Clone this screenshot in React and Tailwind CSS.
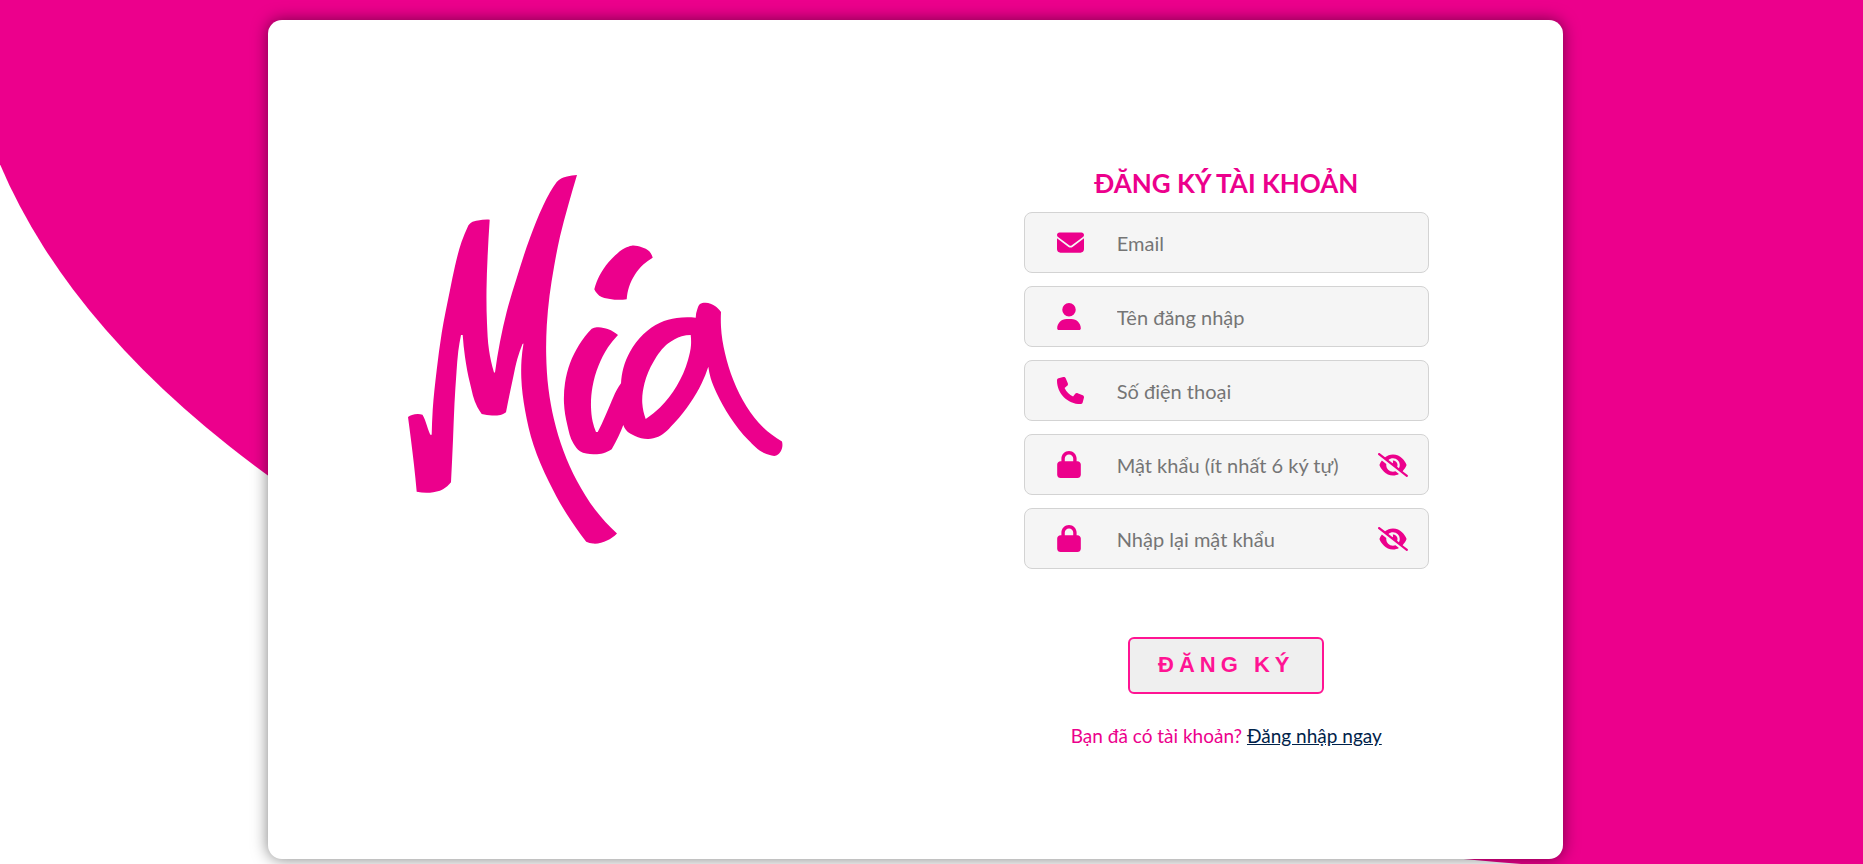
import { useState } from "react";
import { FaEnvelope, FaUser, FaPhone, FaLock, FaEyeSlash, FaEye } from "react-icons/fa6";

// Each outline is a list of smooth runs; the joins between runs are sharp corners.
const OUTLINES = [
  [
    [[408, 417], [412, 415], [418, 414], [422.5, 414.7]],
    [[422.5, 414.7], [425, 420], [428, 429], [430.3, 434.8]],
    [[431.7, 434.8], [432.7, 410], [436.7, 370], [441.7, 333], [450, 290], [455, 266], [461.5, 242], [468.3, 225.5]],
    [[468.3, 225.5], [471, 222.8], [478, 220.6], [489.7, 219.7]],
    [[489.7, 219.7], [487.6, 256.7], [486.5, 290], [487, 323.3], [489, 350], [491, 361], [494, 372.5]],
    [[495, 372.5], [500, 341.7], [506.7, 311.7], [516.7, 278], [530, 237.7], [543, 206], [550, 192.3], [556.7, 182]],
    [[556.7, 182], [560, 179.3], [567, 176.6], [577, 175]],
    [[577, 175], [568.3, 205], [560, 236.5], [554, 267], [549.5, 296], [546.8, 325], [546.2, 355], [548.5, 389], [554, 419.5], [563.5, 451], [577, 481], [595, 509.5], [617, 533.5]],
    [[617, 533.5], [607, 540.5], [593, 543.6], [586.2, 541.7]],
    [[586.2, 541.7], [566.7, 514], [549, 482], [533.5, 445], [525, 410], [521.3, 378], [521.5, 360], [523.5, 343.5]],
    [[522.5, 344], [517.3, 359], [513.3, 376.7], [506, 412.3]],
    [[506, 412.3], [502, 414.5], [492, 415.4], [481.7, 414]],
    [[481.7, 414], [477.3, 407], [470, 383.3], [465, 357], [462.7, 335]],
    [[461, 335], [458.3, 351], [456.5, 372], [454.5, 403.3], [453, 440], [451, 482.3]],
    [[451, 482.3], [443, 489.3], [430, 492.7], [416.7, 491.7]],
    [[416.7, 491.7], [414, 465], [411, 440], [408, 417]],
  ],
  [
    [[594.3, 289.3], [596.7, 281.7], [603.3, 269.3], [615, 255.5], [625, 248], [631.7, 245.7], [641.7, 247.3], [649.3, 251.3], [652.7, 257.7]],
    [[652.7, 257.7], [643.3, 264.5], [635, 274.5], [629, 287], [626.7, 299.3]],
    [[626.7, 299.3], [610, 299], [599.3, 295.7], [594.3, 289.3]],
  ],
  [
    [[591.7, 328.7], [596.7, 327.3], [608.3, 329.3], [618, 335]],
    [[618, 335], [608, 347.3], [598.5, 365.7], [592.5, 386.7], [591, 406.7], [592.7, 421.7], [596, 432]],
    [[597.7, 432], [601.7, 424], [610, 405], [617, 389.5], [621, 383.3]],
    [[621, 383.3], [623.3, 368.3], [630, 351.7], [643.3, 334.3], [660, 322.7], [676.7, 318], [695.7, 317.7]],
    [[695.7, 317.7], [697.3, 309.3], [700, 304], [705, 302.7], [715, 306], [721, 312]],
    [[721, 312], [721, 326.7], [725, 353.3], [733.3, 380], [746.7, 406.7], [763, 427.3], [782, 441.5]],
    [[782, 441.5], [782, 448.3], [778, 454.5], [774.3, 456]],
    [[774.3, 456], [764, 453], [748.3, 440], [730, 417], [716.7, 393.3], [710.7, 378.3], [708.3, 366.7]],
    [[708.3, 366.7], [701.7, 383.3], [690, 403.3], [675, 422.3], [658.3, 436.7], [648.3, 439], [635, 436], [626, 430], [623.3, 425]],
    [[623.3, 425], [618.3, 436.7], [611.7, 449.3]],
    [[611.7, 449.3], [603.3, 453.3], [593.3, 454.3], [580, 451.3], [573.3, 443.3], [567.3, 425], [564, 403.3], [565, 383], [570, 363.3], [579, 345], [591.7, 328.7]],
  ],
  [
    [[690.7, 335], [681.7, 336.2], [668.3, 343.3], [653.5, 361.7], [644.5, 383.3], [642.3, 403.3], [645.7, 419]],
    [[645.7, 419], [660, 407.5], [676.7, 386], [688, 360], [691, 345], [690.7, 335]],
  ],
];

const distance = (p, q) => Math.hypot(q[0] - p[0], q[1] - p[1]);
const slope = (p, q) => [0, 1].map((k) => (q[k] - p[k]) / distance(p, q));

// Unit-speed tangents, weighted by the distance to each neighbour.
function tangents(points) {
  const last = points.length - 1;
  const inner = points.map((point, i) => {
    if (i === 0 || i === last) return null;
    const h0 = distance(points[i - 1], point);
    const h1 = distance(point, points[i + 1]);
    const s0 = slope(points[i - 1], point);
    const s1 = slope(point, points[i + 1]);
    return [0, 1].map((k) => (s0[k] * h1 + s1[k] * h0) / (h0 + h1));
  });
  const start = slope(points[0], points[1]);
  const end = slope(points[last - 1], points[last]);
  inner[0] = start.map((v, k) => 2 * v - inner[1][k]);
  inner[last] = end.map((v, k) => 2 * v - inner[last - 1][k]);
  return inner;
}

function smoothRun(points) {
  const t = tangents(points);
  return points
    .slice(1)
    .map((to, i) => {
      const from = points[i];
      const third = distance(from, to) / 3;
      const a = from.map((v, k) => (v + t[i][k] * third).toFixed(2));
      const b = to.map((v, k) => (v - t[i + 1][k] * third).toFixed(2));
      return `C${a.join(" ")} ${b.join(" ")} ${to.join(" ")}`;
    })
    .join("");
}

const LOGO_PATH = OUTLINES.map(
  (runs) => `M${runs[0][0].join(" ")}` + runs.map((run) => `L${run[0].join(" ")}${smoothRun(run)}`).join("") + "Z"
).join("");

function Logo() {
  return (
    <svg viewBox="402 172 382 376" role="img" aria-label="Mia" className="w-[382px] max-w-full text-[#ec008c]">
      <path d={LOGO_PATH} fill="currentColor" fillRule="evenodd" />
    </svg>
  );
}

function Field({ id, icon: Icon, placeholder, type = "text", iconClass = "w-6" }) {
  const [visible, setVisible] = useState(false);
  const isPassword = type === "password";
  const Eye = visible ? FaEye : FaEyeSlash;
  return (
    <div className="flex h-[61px] items-center rounded-lg border border-[#d3d3d3] bg-[#f5f5f5] pr-5 pl-8">
      <label htmlFor={id} aria-label={placeholder} className="flex w-15 shrink-0 text-[#ec008c]">
        <Icon className={`h-[27px] ${iconClass}`} />
      </label>
      <input
        id={id}
        type={isPassword && visible ? "text" : type}
        placeholder={placeholder}
        className="h-full min-w-0 flex-1 bg-transparent text-xl text-[#333] outline-none placeholder:text-[#757575]"
      />
      {isPassword && (
        <button
          type="button"
          aria-label="Hiện mật khẩu"
          onClick={() => setVisible(!visible)}
          className="shrink-0 cursor-pointer text-[#ec008c]"
        >
          <Eye className="h-6 w-[30px]" />
        </button>
      )}
    </div>
  );
}

export default function App() {
  return (
    <div className="relative flex min-h-screen overflow-hidden bg-white pt-5 pr-[300px] pb-[5px] pl-[268px] font-[Lato,'Noto_Sans',sans-serif]">
      <div className="absolute -top-[894px] -left-9 h-[1770px] w-[200vw] rounded-[50%] bg-[#ec008c]" />
      <main className="relative grid flex-1 grid-cols-2 items-start rounded-[14px] bg-white pt-[142px] pr-5 pb-16 pl-2 shadow-[0_0_16px_rgba(0,0,0,0.5)]">
        <div className="flex justify-center pt-[10px]">
          <Logo />
        </div>
        <form className="flex flex-col items-center" onSubmit={(event) => event.preventDefault()}>
          <h1 className="text-[26px] leading-[42px] font-bold text-[#ec008c]">ĐĂNG KÝ TÀI KHOẢN</h1>
          <div className="mt-2 flex w-[405px] max-w-full flex-col gap-[13px]">
            <Field id="email" icon={FaEnvelope} placeholder="Email" type="email" iconClass="w-[27px]" />
            <Field id="username" icon={FaUser} placeholder="Tên đăng nhập" />
            <Field id="phone" icon={FaPhone} placeholder="Số điện thoại" type="tel" iconClass="w-[27px]" />
            <Field id="password" icon={FaLock} placeholder="Mật khẩu (ít nhất 6 ký tự)" type="password" />
            <Field id="confirm" icon={FaLock} placeholder="Nhập lại mật khẩu" type="password" />
          </div>
          <button
            type="submit"
            className="mt-[68px] cursor-pointer rounded-md border-2 border-[#ff1493] bg-[#efefef] px-7 pt-[13px] pb-[14px] font-['Liberation_Sans',Arial,sans-serif] text-[22px] leading-[26px] font-bold tracking-[5px] text-[#ff1493]"
          >
            ĐĂNG KÝ
          </button>
          <p className="mt-7 text-[19px] leading-7 text-[#ec008c]">
            Bạn đã có tài khoản?{" "}
            <a href="#login" className="text-[#00224a] underline">
              Đăng nhập ngay
            </a>
          </p>
        </form>
      </main>
    </div>
  );
}
